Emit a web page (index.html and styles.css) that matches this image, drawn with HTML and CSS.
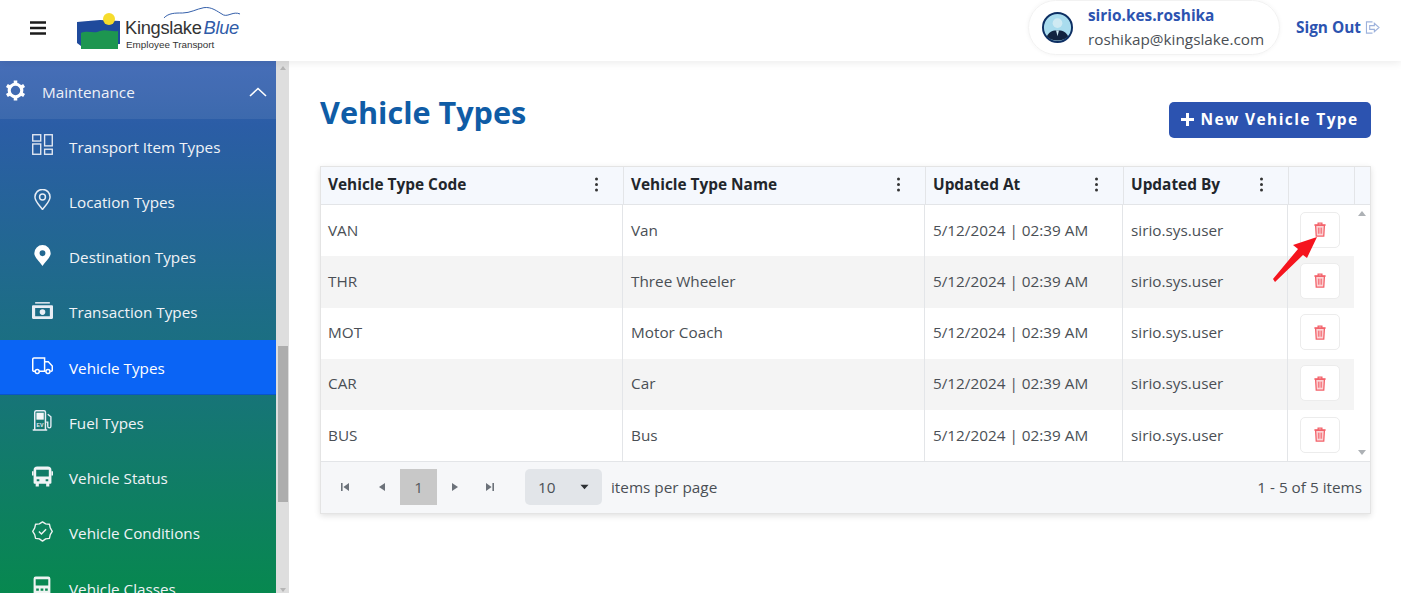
FILE: index.html
```html
<!DOCTYPE html>
<html lang="en">
<head>
    <meta charset="UTF-8">
    <title>Vehicle Types</title>
    <link rel="stylesheet" href="styles.css">
</head>
<body>
<div class="page">
    <header class="topbar">
        <div class="brand">
            <svg class="burger" viewBox="0 0 16 14"><path d="M0 1.5H16M0 7H16M0 12.5H16" stroke="#1c1c1c" stroke-width="2.6"/></svg>
            <div class="logo">
                <svg class="logo-mark" viewBox="0 0 45 38">
                    <path d="M1 9C8 8 16 8 24 7L44 8V31L5 33L1 30Z" fill="#1f4a9c"/>
                    <path d="M5 20C12 17 18 21 24 18C30 16 36 19 42 18V36H5Z" fill="#1d9650"/>
                    <circle cx="33" cy="6" r="6" fill="#f6dc2c"/>
                </svg>
                <div class="logo-text">
                    <div class="logo-name">Kingslake<em>Blue</em></div>
                    <div class="logo-sub">Employee Transport</div>
                </div>
                <svg class="logo-swoosh" viewBox="0 0 80 14"><path d="M1 12C6 7 12 7 20 7C28 7 34 3 42 1.5C50 0.5 55 5 62 9C67 11 72 5 79 8" fill="none" stroke="#2f5ba8" stroke-width="1"/></svg>
            </div>
        </div>
        <div class="account">
            <div class="user-pill">
                <svg class="avatar" viewBox="0 0 32 32">
                    <circle cx="16" cy="16" r="15" fill="#a9dcee" stroke="#0d2f63" stroke-width="2"/>
                    <circle cx="16" cy="11.5" r="5" fill="#cfeaf3"/>
                    <path d="M5 25C8 19 12 19 16 19C20 19 24 19 27 25C22 31 10 31 5 25Z" fill="#12233f"/>
                    <path d="M14.5 19H17.5L16 25Z" fill="#cfeaf3"/>
                </svg>
                <div class="user-info">
                    <div class="user-name">sirio.kes.roshika</div>
                    <div class="user-mail">roshikap@kingslake.com</div>
                </div>
            </div>
            <a class="sign-out">Sign Out
                <svg viewBox="0 0 16 14"><path d="M8 1H1.5V13H8M5 5H10V2.5L15 7L10 11.5V9H5Z" fill="none" stroke="#9db2dc" stroke-width="1.2"/></svg>
            </a>
        </div>
    </header>

    <div class="main">
        <aside class="sidebar">
            <nav class="menu">
                <div class="menu-head">
                    <svg class="gear" viewBox="0 0 20 20"><circle cx="10" cy="10" r="6" fill="none" stroke="#fff" stroke-width="3"/><path d="M10 0.5V4M10 16V19.5M1.8 5.2L4.8 7M15.2 13L18.2 14.8M1.8 14.8L4.8 13M15.2 7L18.2 5.2" stroke="#fff" stroke-width="3.4"/></svg>
                    <span>Maintenance</span>
                    <svg class="chevron" viewBox="0 0 18 10"><path d="M1 9L9 1.5L17 9" fill="none" stroke="#fff" stroke-width="1.6"/></svg>
                </div>
                <a class="menu-item">
                    <svg viewBox="0 0 20 20"><g fill="none" stroke="#e4e9f3" stroke-width="1.3"><rect x="0.7" y="0.7" width="7.6" height="6"/><rect x="12" y="0.7" width="7.3" height="10.6"/><rect x="0.7" y="9.5" width="7.6" height="9.8"/><rect x="12" y="14.5" width="7.3" height="4.8"/></g></svg>
                    Transport Item Types
                </a>
                <a class="menu-item">
                    <svg viewBox="0 0 20 20"><path d="M10 19.5C6 14.5 2.8 11.5 2.8 7.6A7.2 7.2 0 0 1 17.2 7.6C17.2 11.5 14 14.5 10 19.5Z" fill="none" stroke="#e8edf5" stroke-width="1.4"/><circle cx="10" cy="7.6" r="2.8" fill="none" stroke="#e8edf5" stroke-width="1.4"/></svg>
                    Location Types
                </a>
                <a class="menu-item">
                    <svg viewBox="0 0 20 20"><path fill-rule="evenodd" d="M10 20C6 14.5 2.2 11.5 2.2 7.8A7.8 7.8 0 0 1 17.8 7.8C17.8 11.5 14 14.5 10 20ZM10 5A2.8 2.8 0 1 0 10 10.6A2.8 2.8 0 1 0 10 5Z" fill="#fff"/></svg>
                    Destination Types
                </a>
                <a class="menu-item">
                    <svg viewBox="0 0 20 20"><path d="M3 2H17V3.4H3Z" fill="#e8edf5"/><path fill-rule="evenodd" d="M1 5H19A1 1 0 0 1 20 6V17A1 1 0 0 1 19 18H1A1 1 0 0 1 0 17V6A1 1 0 0 1 1 5ZM3 7.5V15.5H17V7.5ZM10 8.8A2.7 2.7 0 1 1 10 14.2A2.7 2.7 0 1 1 10 8.8Z" fill="#e8edf5"/></svg>
                    Transaction Types
                </a>
                <a class="menu-item active">
                    <svg viewBox="0 0 20 20"><path d="M3.2 15.5H1.7A1 1 0 0 1 0.7 14.5V4A1.2 1.2 0 0 1 1.9 2.8H12V15.5H7M12 6.5H15.5L19.3 10.5V14.5A1 1 0 0 1 18.3 15.5H17.5M12 15.5H13" fill="none" stroke="#fff" stroke-width="1.4"/><circle cx="5" cy="15.8" r="1.9" fill="none" stroke="#fff" stroke-width="1.4"/><circle cx="15.2" cy="15.8" r="1.9" fill="none" stroke="#fff" stroke-width="1.4"/></svg>
                    Vehicle Types
                </a>
                <a class="menu-item">
                    <svg viewBox="0 0 20 20"><path d="M2.6 18.5V2A1.4 1.4 0 0 1 4 0.8H11.5A1.4 1.4 0 0 1 12.8 2V18.5M0.7 19H14.5" fill="none" stroke="#e8edf5" stroke-width="1.4"/><rect x="4.2" y="2.6" width="7" height="6.6" fill="#f4f6f8"/><text class="ev" x="4.4" y="16">EV</text><path d="M15 4L18 6.5V15.5A1.5 1.5 0 0 1 15 15.5V11.5H13.5" fill="none" stroke="#e8edf5" stroke-width="1.3"/></svg>
                    Fuel Types
                </a>
                <a class="menu-item">
                    <svg viewBox="0 0 20 20"><path fill-rule="evenodd" d="M5 0.5H15A3.5 3.5 0 0 1 18.5 4V16A1 1 0 0 1 17.5 17H16.5V19.5H13.5V17H6.5V19.5H3.5V17H2.5A1 1 0 0 1 1.5 16V4A3.5 3.5 0 0 1 5 0.5ZM4 3.5V10H16V3.5ZM4.5 12.5V14.5H7V12.5ZM13 12.5V14.5H15.5V12.5Z" fill="#f1f4f6"/><path d="M0 5H1.5V9H0ZM18.5 5H20V9H18.5Z" fill="#f1f4f6"/></svg>
                    Vehicle Status
                </a>
                <a class="menu-item">
                    <svg viewBox="0 0 20 20"><path d="M10 0.8L13 2.7L16.6 3.1L17.4 6.6L19.3 9.8L17.4 13L16.6 16.5L13 17L10 19.2L7 17L3.4 16.5L2.6 13L0.7 9.8L2.6 6.6L3.4 3.1L7 2.7Z" fill="none" stroke="#eef3f1" stroke-width="1.3" stroke-linejoin="round"/><path d="M6.6 10L9 12.3L13.4 7.8" fill="none" stroke="#eef3f1" stroke-width="1.4"/></svg>
                    Vehicle Conditions
                </a>
                <a class="menu-item">
                    <svg viewBox="0 0 20 20"><path fill-rule="evenodd" d="M3.5 0.5H15.5A2 2 0 0 1 17.5 2.5V19.5H1.5V2.5A2 2 0 0 1 3.5 0.5ZM3.5 3V9H15.5V3ZM4 12V14H6.5V12ZM8.2 12V14H10.8V12ZM12.5 12V14H15V12Z" fill="#eef3f1"/></svg>
                    Vehicle Classes
                </a>
            </nav>
            <div class="side-scroll"><span class="scroll-up"></span><span class="scroll-thumb"></span><span class="scroll-down"></span></div>
        </aside>

        <main class="content">
            <div class="page-head">
                <h1>Vehicle Types</h1>
                <button class="btn-new"><span class="plus"></span>New Vehicle Type</button>
            </div>

            <section class="grid">
                <div class="grid-head">
                    <div class="hcell c1">Vehicle Type Code<span class="dots"></span></div>
                    <div class="hcell c2">Vehicle Type Name<span class="dots"></span></div>
                    <div class="hcell c3">Updated At<span class="dots"></span></div>
                    <div class="hcell c4">Updated By<span class="dots"></span></div>
                    <div class="hcell c5"></div>
                    <div class="hcell c6"></div>
                </div>
                <div class="grid-body">
                    <div class="rows">
                        <div class="row"><div class="cell c1">VAN</div><div class="cell c2">Van</div><div class="cell c3">5/12/2024 | 02:39 AM</div><div class="cell c4">sirio.sys.user</div><div class="cell c5"><button class="btn-del"><svg viewBox="0 0 14 16"><use href="#trash"/></svg></button></div></div>
                        <div class="row"><div class="cell c1">THR</div><div class="cell c2">Three Wheeler</div><div class="cell c3">5/12/2024 | 02:39 AM</div><div class="cell c4">sirio.sys.user</div><div class="cell c5"><button class="btn-del"><svg viewBox="0 0 14 16"><use href="#trash"/></svg></button></div></div>
                        <div class="row"><div class="cell c1">MOT</div><div class="cell c2">Motor Coach</div><div class="cell c3">5/12/2024 | 02:39 AM</div><div class="cell c4">sirio.sys.user</div><div class="cell c5"><button class="btn-del"><svg viewBox="0 0 14 16"><use href="#trash"/></svg></button></div></div>
                        <div class="row"><div class="cell c1">CAR</div><div class="cell c2">Car</div><div class="cell c3">5/12/2024 | 02:39 AM</div><div class="cell c4">sirio.sys.user</div><div class="cell c5"><button class="btn-del"><svg viewBox="0 0 14 16"><use href="#trash"/></svg></button></div></div>
                        <div class="row"><div class="cell c1">BUS</div><div class="cell c2">Bus</div><div class="cell c3">5/12/2024 | 02:39 AM</div><div class="cell c4">sirio.sys.user</div><div class="cell c5"><button class="btn-del"><svg viewBox="0 0 14 16"><use href="#trash"/></svg></button></div></div>
                    </div>
                    <div class="grid-scroll"><span class="arrow-up"></span><span class="arrow-down"></span></div>
                </div>
                <div class="pager">
                    <div class="pager-left">
                        <svg class="pg" viewBox="0 0 10 10"><path d="M1 1H2.6V9H1ZM9 1V9L3.4 5Z" fill="#6c727a"/></svg>
                        <svg class="pg" viewBox="0 0 10 10"><path d="M8 1V9L2 5Z" fill="#6c727a"/></svg>
                        <span class="pg-num">1</span>
                        <svg class="pg" viewBox="0 0 10 10"><path d="M2 1V9L8 5Z" fill="#6c727a"/></svg>
                        <svg class="pg" viewBox="0 0 10 10"><path d="M1 1V9L6.6 5ZM7.4 1H9V9H7.4Z" fill="#6c727a"/></svg>
                        <div class="pg-size">10<svg viewBox="0 0 10 6"><path d="M0.5 0.5H9.5L5 5.5Z" fill="#2c2f33"/></svg></div>
                        <span class="pg-label">items per page</span>
                    </div>
                    <div class="pg-total">1 - 5 of 5 items</div>
                </div>
            </section>
        </main>
    </div>

    <svg class="red-arrow" viewBox="0 0 46 48"><path d="M1 43L3 46L31 19L35 22L45 1L21 9L26 13Z" fill="#f5141e"/></svg>
</div>

<svg class="defs" width="0" height="0">
    <symbol id="trash" viewBox="0 0 14 16">
        <path d="M1 3.2H13M5 3V1.2H9V3" fill="none" stroke="#f3636b" stroke-width="1.4"/>
        <path d="M2.3 3.5L3 15H11L11.7 3.5Z" fill="#fbd5d7" stroke="#f3636b" stroke-width="1.4"/>
        <path d="M5.3 6V12.5M7 6V12.5M8.7 6V12.5" stroke="#f3636b" stroke-width="0.9"/>
    </symbol>
</svg>
</body>
</html>
```

FILE: styles.css
```css
:root {
    --blue: #2c53b0;
    --title: #0f5ca6;
    --line: #e3e5e8;
    --text: #4a4f55;
}

* {
    box-sizing: border-box;
}

html, body {
    margin: 0;
    height: 100%;
    background: white;
    overflow: hidden;
}

body {
    font-family: "Open Sans", "Noto Sans", sans-serif;
    color: var(--text);
}

.defs {
    position: absolute;
}

.page {
    position: relative;
    width: 1401px;
    height: 593px;
    overflow: hidden;
    display: flex;
    flex-direction: column;
}

.topbar {
    height: 61px;
    flex: none;
    display: flex;
    justify-content: space-between;
    align-items: flex-start;
    padding-left: 30px;
    padding-right: 21px;
    background: white;
    box-shadow: 0 2px 8px rgba(0,0,0,0.08);
    position: relative;
    z-index: 2;
}

.brand {
    display: flex;
    align-items: center;
    gap: 30px;
    height: 60px;
}

.burger {
    width: 16px;
    height: 14px;
    margin-bottom: 5px;
}

.logo {
    position: relative;
    display: flex;
    gap: 4px;
    margin-top: 4px;
    align-items: flex-end;
}

.logo-mark {
    width: 45px;
    height: 38px;
}

.logo-text {
    color: #333;
    line-height: 1;
    font-family: "Liberation Sans", sans-serif;
}

.logo-name {
    font-size: 18.3px;
    letter-spacing: -0.3px;
}

.logo-name em {
    color: #2f5ba8;
    margin-left: 2px;
}

.logo-sub {
    font-size: 9.9px;
    margin: 3px 0 1px 1px;
}

.logo-swoosh {
    position: absolute;
    top: -7px;
    left: 87px;
    width: 78px;
    height: 14px;
}

.account {
    display: flex;
    align-items: center;
    gap: 16px;
}

.user-pill {
    display: flex;
    align-items: center;
    gap: 15px;
    width: 252px;
    height: 55px;
    padding-left: 13px;
    border: 1px solid #f2f2f2;
    border-radius: 28px;
    box-shadow: 0 0 4px rgba(0,0,0,0.05);
}

.avatar {
    width: 31px;
    height: 31px;
}

.user-info {
    padding-top: 2px;
}

.user-name {
    font-size: 15.4px;
    font-weight: 700;
    color: var(--blue);
    line-height: 20px;
}

.user-mail {
    font-size: 15.3px;
    line-height: 24px;
    margin-top: 1px;
}

.sign-out {
    display: flex;
    align-items: center;
    gap: 4px;
    font-size: 15.4px;
    font-weight: 700;
    color: var(--blue);
}

.sign-out svg {
    width: 15px;
    height: 13px;
}

.main {
    flex: 1;
    display: flex;
    min-height: 0;
}

.sidebar {
    width: 289px;
    flex: none;
    display: flex;
}

.menu {
    width: 276px;
    overflow: hidden;
    background: linear-gradient(to bottom, #3862b2, #2b5da6 12%, #1a7080 55%, #07884f 100%);
}

.menu-head {
    height: 58px;
    display: flex;
    align-items: center;
    padding: 3px 9px 0 5px;
    font-size: 15.3px;
    color: #eef1f8;
    background: rgba(255,255,255,0.08);
}

.menu-head span {
    flex: 1;
    margin-left: 16px;
}

.gear {
    width: 21px;
    height: 21px;
    margin-bottom: 2px;
}

.chevron {
    width: 18px;
    height: 10px;
}

.menu-item {
    height: 55.25px;
    display: flex;
    align-items: center;
    gap: 16px;
    padding-left: 32px;
    font-size: 15.25px;
    color: #f0f3f7;
    white-space: nowrap;
}

.menu-item svg {
    width: 21px;
    height: 21px;
    flex: none;
    margin-bottom: 4px;
}

.menu-item .ev {
    font-family: "Liberation Sans", sans-serif;
    font-size: 5px;
    font-weight: 700;
    fill: #e8edf5;
}

.menu-item.active {
    background: #0a64f5;
    box-shadow: inset 0 -1px 0 #0a55c9;
    color: white;
}

.side-scroll {
    width: 13px;
    background: #dedede;
    display: flex;
    flex-direction: column;
    align-items: center;
    padding: 0 1px;
}

.scroll-up {
    margin-top: 5px;
    border: 3px solid transparent;
    border-top: 0;
    border-bottom: 4px solid #b5b5b5;
}

.scroll-thumb {
    width: 10px;
    height: 156px;
    background: #adadad;
    margin-top: 276px;
}

.scroll-down {
    margin-top: auto;
    margin-bottom: 1px;
    border: 3px solid transparent;
    border-bottom: 0;
    border-top: 4px solid #b5b5b5;
}

.content {
    flex: 1;
    padding-left: 31px;
    padding-right: 29px;
}

.page-head {
    height: 105px;
    display: flex;
    justify-content: space-between;
    align-items: flex-start;
}

h1 {
    margin: 29px 0 0;
    font-size: 30.6px;
    line-height: 44px;
    font-weight: 700;
    color: var(--title);
}

.btn-new {
    margin-top: 41px;
    margin-right: 1px;
    width: 202px;
    height: 36px;
    padding: 0 0 2px;
    display: flex;
    align-items: center;
    justify-content: center;
    gap: 6px;
    background: var(--blue);
    color: white;
    border: none;
    border-radius: 5px;
    font-family: inherit;
    font-size: 15.5px;
    font-weight: 700;
    letter-spacing: 1.4px;
}

.plus {
    width: 13px;
    height: 13px;
    background:
        linear-gradient(white, white) center / 13px 3px no-repeat,
        linear-gradient(white, white) center / 3px 13px no-repeat;
}

.grid {
    width: 1051px;
    border: 1px solid #e4e4e4;
    box-shadow: 0 2px 6px rgba(0,0,0,0.12);
    background: white;
}

.grid-head {
    height: 38px;
    display: flex;
    background: #f5f8fd;
    border-bottom: 1px solid var(--line);
}

.hcell {
    flex: none;
    display: flex;
    align-items: center;
    justify-content: space-between;
    padding: 0 25px 2px 7px;
    font-size: 15.4px;
    font-weight: 700;
    color: #22262b;
    border-right: 1px solid var(--line);
}

.hcell.c6 {
    flex: 1;
    border-right: none;
}

.c1 { width: 303px; }
.c2 { width: 302px; }
.c3 { width: 198px; }
.c4 { width: 165px; }
.c5 { width: 66px; }
.c6 { width: 16px; }

.dots {
    width: 3px;
    height: 3px;
    border-radius: 50%;
    background: #333;
    box-shadow: 0 -5.5px 0 #333, 0 5.5px 0 #333;
}

.grid-body {
    display: flex;
    height: 256.25px;
}

.rows {
    flex: 1;
}

.row {
    display: flex;
    height: 51.25px;
}

.row:nth-child(even) {
    background: #f4f4f4;
}

.cell {
    flex: none;
    display: flex;
    align-items: center;
    padding: 0 0 2px 8px;
    font-size: 15.3px;
    color: var(--text);
    border-right: 1px solid var(--line);
}

.cell.c1 {
    width: 302px;
    padding-left: 7px;
}

.cell.c5 {
    border-right: none;
    padding-left: 12px;
}

.btn-del {
    width: 40px;
    height: 36px;
    padding: 0;
    display: flex;
    align-items: center;
    justify-content: center;
    background: white;
    border: 1px solid #ececec;
    border-radius: 5px;
}

.btn-del svg {
    width: 14px;
    height: 15px;
}

.grid-scroll {
    width: 16px;
    flex: none;
    display: flex;
    flex-direction: column;
    align-items: center;
    justify-content: space-between;
    padding: 6px 0;
    background: white;
}

.arrow-up {
    border: 4px solid transparent;
    border-top: 0;
    border-bottom: 5px solid #adb1b5;
}

.arrow-down {
    border: 4px solid transparent;
    border-bottom: 0;
    border-top: 5px solid #adb1b5;
}

.pager {
    height: 52px;
    display: flex;
    align-items: center;
    justify-content: space-between;
    padding: 0 8px 2px 19px;
    background: #f6f7f9;
    border-top: 1px solid var(--line);
    font-size: 15.3px;
}

.pager-left {
    display: flex;
    align-items: center;
}

.pg {
    width: 10px;
    height: 10px;
}

.pg:nth-child(1) { margin-right: 27px; }
.pg:nth-child(2) { margin-right: 13px; }
.pg:nth-child(4) { margin-left: 13px; margin-right: 25px; }

.pg-num {
    width: 37px;
    height: 36px;
    display: flex;
    align-items: center;
    justify-content: center;
    background: #c8c8c8;
    color: #55595e;
}

.pg-size {
    width: 77px;
    height: 36px;
    margin-left: 30px;
    display: flex;
    align-items: center;
    justify-content: space-between;
    padding: 0 13px;
    background: #e2e5e9;
    border-radius: 5px;
}

.pg-size svg {
    width: 9px;
    height: 6px;
}

.pg-label {
    margin-left: 9px;
}

.red-arrow {
    position: absolute;
    left: 1272px;
    top: 236px;
    width: 46px;
    height: 48px;
}
```
